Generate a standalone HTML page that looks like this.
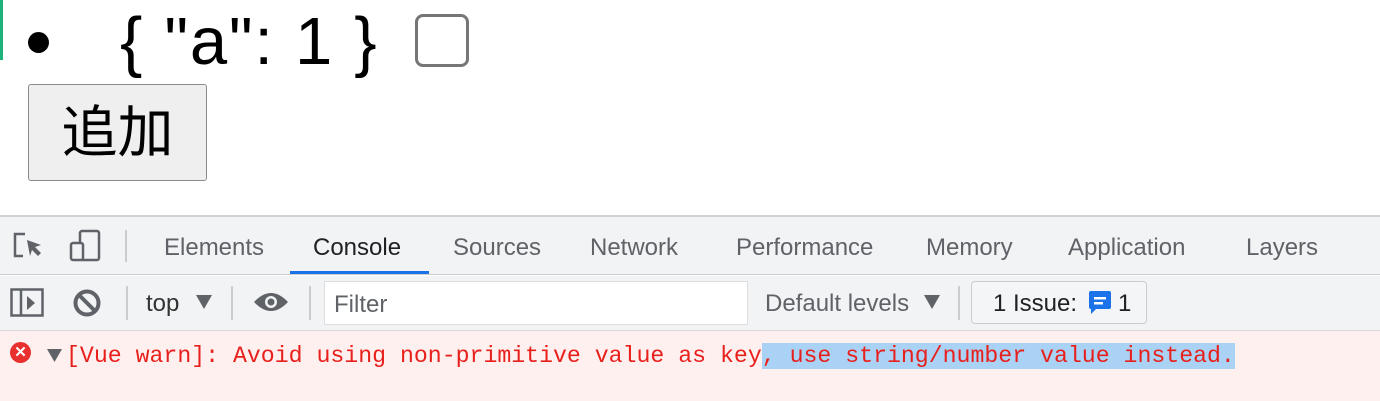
<!DOCTYPE html><html><head><style>
body{margin:0;width:1380px;height:401px;overflow:hidden;background:#fff;font-family:"Liberation Sans","Noto Sans CJK SC",sans-serif;position:relative}
.a{position:absolute}
.tab{position:absolute;top:234px;font-size:24px;color:#5f6368}
</style></head><body>
<div class="a" style="left:0;top:0;width:3px;height:60px;background:#1db37a"></div>
<div class="a" style="left:28px;top:32px;width:21px;height:21px;border-radius:50%;background:#000"></div>
<div class="a" style="left:120px;top:4px;font-size:67px;line-height:76px;color:#000;letter-spacing:1.7px;white-space:pre">{ "a": 1 }</div>
<div class="a" style="left:415px;top:14px;width:48px;height:47px;border:3px solid #767676;border-radius:8px"></div>
<div class="a" style="left:28px;top:84px;width:177px;height:95px;border:1.5px solid #8a8a8a;border-radius:3px;background:#efefef;font-size:56px;line-height:95px;text-align:center;color:#000">追加</div>
<div class="a" style="left:0;top:215px;width:1380px;height:2px;background:#d0d3d6"></div>
<div class="a" style="left:0;top:217px;width:1380px;height:57px;background:#f1f3f4;border-bottom:1.5px solid #cbcdd1"></div>
<svg class="a" style="left:12px;top:230px" width="36" height="32" viewBox="0 0 36 32"><path d="M13 4H3v22h8" fill="none" stroke="#5f6368" stroke-width="2.5"/><path d="M15 10l14 5-6 2 6 6-3 3-6-6-2 6z" fill="#5f6368"/></svg>
<svg class="a" style="left:68px;top:228px" width="36" height="36" viewBox="0 0 36 36"><rect x="12" y="3" width="19" height="29" rx="2" fill="none" stroke="#5f6368" stroke-width="2.5"/><rect x="3" y="15" width="12" height="17" rx="2" fill="#f1f3f4" stroke="#5f6368" stroke-width="2.5"/></svg>
<div class="a" style="left:125px;top:230px;width:2px;height:32px;background:#ccc"></div>
<div class="tab" style="left:164px">Elements</div>
<div class="tab" style="left:313px;color:#202124">Console</div>
<div class="a" style="left:290px;top:271px;width:139px;height:3px;background:#1a73e8"></div>
<div class="tab" style="left:453px">Sources</div>
<div class="tab" style="left:590px">Network</div>
<div class="tab" style="left:736px">Performance</div>
<div class="tab" style="left:926px">Memory</div>
<div class="tab" style="left:1068px">Application</div>
<div class="tab" style="left:1246px">Layers</div>
<div class="a" style="left:0;top:276px;width:1380px;height:54px;background:#f1f3f4;border-bottom:1.5px solid #d8d8d8"></div>
<svg class="a" style="left:10px;top:288px" width="34" height="30" viewBox="0 0 34 30"><rect x="1.5" y="1.5" width="31" height="26" fill="none" stroke="#5f6368" stroke-width="2.5"/><line x1="11" y1="2" x2="11" y2="28" stroke="#5f6368" stroke-width="2.5"/><path d="M17 8l8 7-8 7z" fill="#5f6368"/></svg>
<svg class="a" style="left:72px;top:288px" width="30" height="30" viewBox="0 0 30 30"><circle cx="15" cy="15" r="11.5" fill="none" stroke="#5f6368" stroke-width="4"/><line x1="7" y1="7" x2="23" y2="23" stroke="#5f6368" stroke-width="4"/></svg>
<div class="a" style="left:126px;top:286px;width:2px;height:34px;background:#ccc"></div>
<div class="a" style="left:146px;top:290px;font-size:24px;color:#333">top</div>
<svg class="a" style="left:196px;top:295px" width="16" height="14"><path d="M0 0h16L8 14z" fill="#5f6368"/></svg>
<div class="a" style="left:231px;top:286px;width:2px;height:34px;background:#ccc"></div>
<svg class="a" style="left:253px;top:290px" width="36" height="24" viewBox="0 0 36 24"><path d="M1 12Q18-6 35 12Q18 30 1 12z" fill="#5f6368"/><circle cx="18" cy="12" r="6" fill="#f1f3f4"/><circle cx="18" cy="12" r="3.5" fill="#5f6368"/></svg>
<div class="a" style="left:309px;top:286px;width:2px;height:34px;background:#ccc"></div>
<div class="a" style="left:324px;top:281px;width:422px;height:42px;background:#fff;border:1px solid #ddd"></div>
<div class="a" style="left:334px;top:291px;font-size:24px;color:#5f6368">Filter</div>
<div class="a" style="left:765px;top:290px;font-size:24px;color:#5f6368">Default levels</div>
<svg class="a" style="left:924px;top:295px" width="16" height="14"><path d="M0 0h16L8 14z" fill="#5f6368"/></svg>
<div class="a" style="left:958px;top:286px;width:2px;height:34px;background:#ccc"></div>
<div class="a" style="left:971px;top:281px;width:174px;height:41px;border:1.5px solid #ccc;border-radius:4px;background:#f4f5f6"></div>
<div class="a" style="left:993px;top:290px;font-size:24px;color:#202124">1 Issue:</div>
<svg class="a" style="left:1088px;top:290px" width="24" height="26" viewBox="0 0 24 26"><path d="M3 1h18a2 2 0 0 1 2 2v14a2 2 0 0 1-2 2H8l-5 5v-5a2 2 0 0 1-2-2V3a2 2 0 0 1 2-2z" fill="#1a73e8"/><rect x="6" y="7" width="12" height="2.5" fill="#fff"/><rect x="6" y="12" width="9" height="2.5" fill="#fff"/></svg>
<div class="a" style="left:1118px;top:290px;font-size:24px;color:#202124">1</div>
<div class="a" style="left:0;top:331px;width:1380px;height:70px;background:#fff0f0"></div>
<div class="a" style="left:10px;top:342px;width:21px;height:21px;border-radius:50%;background:#e8312f;color:#fff;font-size:15px;line-height:21px;text-align:center;font-weight:bold">✕</div>
<svg class="a" style="left:47px;top:349px" width="15" height="13"><path d="M0 0h15L7.5 13z" fill="#5f6368"/></svg>
<div class="a" style="left:66px;top:341px;font-family:'Liberation Mono',monospace;font-size:23.2px;line-height:30px;color:#e8201c;white-space:pre">[Vue warn]: Avoid using non-primitive value as key<span style="background:#a9d2f5">, use string/number value instead.</span></div>
</body></html>
